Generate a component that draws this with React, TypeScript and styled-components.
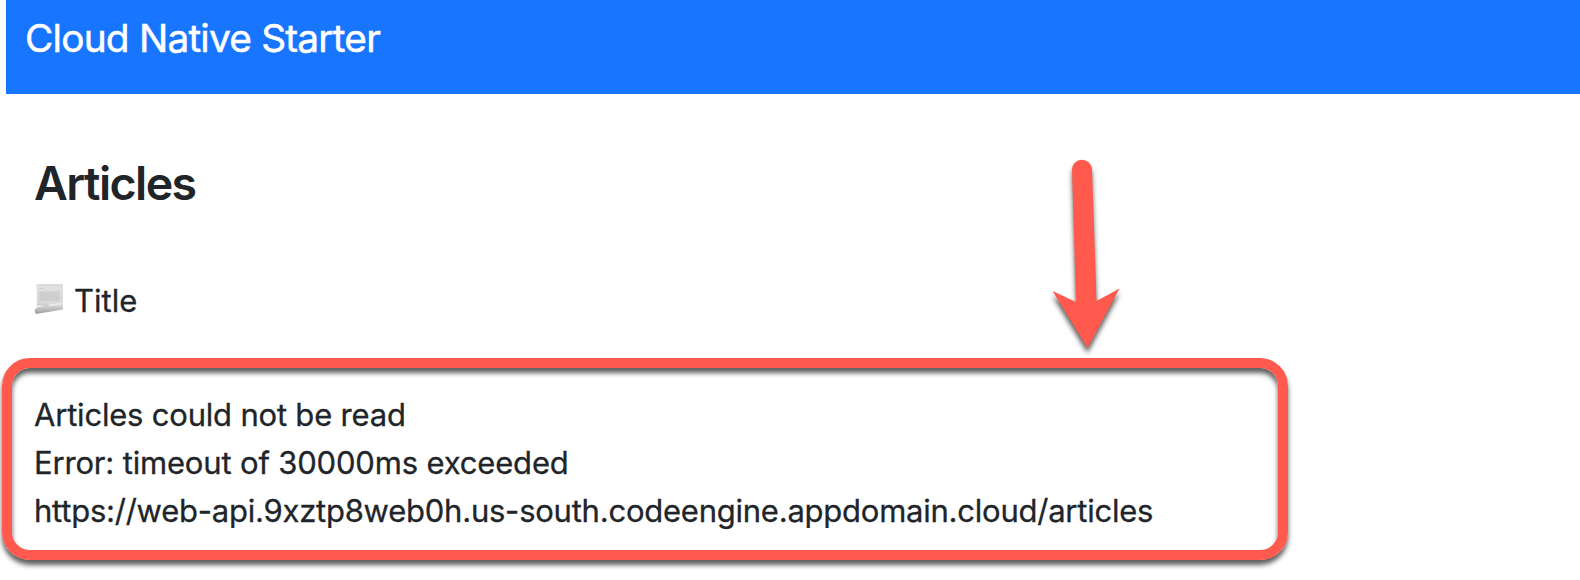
import React from "react";
import styled, { createGlobalStyle } from "styled-components";

const GlobalStyle = createGlobalStyle`
  * { box-sizing: border-box; }
  body {
    margin: 0;
    background: #fff;
    color: #212529;
    font-family: Inter, "Liberation Sans", sans-serif;
    font-weight: 400;
    overflow: hidden;
  }
`;

const Page = styled.div`
  position: relative;
  height: 580px;
  overflow: hidden;
`;

const Navbar = styled.header`
  height: 94px;
  margin-left: 6px;
  padding: 8px 19px;
  background: #1775ff;
`;

const Brand = styled.div`
  color: #fff;
  font-size: 38.8px;
  line-height: 60px;
  letter-spacing: -0.78px;
  white-space: nowrap;
  -webkit-text-stroke: 0.5px currentColor;
`;

const Heading = styled.h1`
  margin: 60px 0 0 34px;
  font-size: 46.5px;
  font-weight: 600;
  line-height: 58px;
  letter-spacing: -1.55px;
`;

const TitleRow = styled.div`
  display: flex;
  align-items: center;
  gap: 10px;
  height: 48px;
  margin: 65px 0 0 34px;
  font-size: 31px;
  line-height: 48px;
  -webkit-text-stroke: 0.3px currentColor;

  svg { margin-top: -4px; }
`;

const ErrorPanel = styled.section`
  width: 1286px;
  height: 202px;
  margin: 33px 0 0 2px;
  padding: 23px 22px;
  border: 10px solid #ff5a4d;
  border-radius: 28px;
  box-shadow:
    0 5px 5px rgba(0, 0, 0, 0.63),
    inset 0 5px 5px rgba(0, 0, 0, 0.63);
`;

const Line = styled.div<{ $tracking: number }>`
  font-size: 31px;
  line-height: 48px;
  letter-spacing: ${(p) => p.$tracking}px;
  white-space: nowrap;
  -webkit-text-stroke: 0.3px currentColor;
`;

const Pointer = styled.svg`
  position: absolute;
  left: 1040px;
  top: 150px;
  filter: drop-shadow(0 5px 2.5px rgba(0, 0, 0, 0.63));
`;

const ScrollIcon = () => (
  <svg width="30" height="32" viewBox="0 0 30 32">
    <defs>
      <linearGradient id="sheet" x1="0" y1="0" x2="0" y2="1">
        <stop offset="0" stopColor="#e2e2e2" />
        <stop offset="1" stopColor="#d4d4d4" />
      </linearGradient>
      <linearGradient id="roll" x1="0" y1="0" x2="0" y2="1">
        <stop offset="0" stopColor="#e0e0e0" />
        <stop offset="1" stopColor="#9c9c9c" />
      </linearGradient>
    </defs>
    <path d="M2.500 1.500H29V21L3 27Z" fill="url(#sheet)" />
    <path d="M2.500 2H29" stroke="#cfcfcf" />
    <path d="M5 5.500H9" stroke="#c8c8c8" />
    <path d="M5 8.500H25.500V18L5 18Z" fill="#cecece" />
    <path d="M3 21L12 22L29 19.500V22L2 27Z" fill="#ededed" />
    <path d="M1.500 25.500L29 21V26.500L2 31Q-.5 28 1.500 25.500Z" fill="url(#roll)" />
    <path d="M3 21.500L15 22.500L3 25" fill="none" stroke="#bdbdbd" strokeWidth=".8" />
  </svg>
);

export default function App() {
  return (
    <>
      <GlobalStyle />
      <Page>
        <Navbar>
          <Brand>Cloud Native Starter</Brand>
        </Navbar>
        <Heading>Articles</Heading>
        <TitleRow>
          <ScrollIcon />
          <span>Title</span>
        </TitleRow>
        <ErrorPanel>
          <Line $tracking={-0.2}>Articles could not be read</Line>
          <Line $tracking={-0.17}>Error: timeout of 30000ms exceeded</Line>
          <Line $tracking={-0.235}>
            https://web-api.9xztp8web0h.us-south.codeengine.appdomain.cloud/articles
          </Line>
        </ErrorPanel>
        <Pointer width="90" height="210" viewBox="1040 150 90 210">
          <path
            d="M1072 170A10 10 0 0 1 1092 169.500L1096.500 301L1119.500 288.500L1087.500 348L1052.500 291L1076 302Z"
            fill="#ff5a4d"
          />
        </Pointer>
      </Page>
    </>
  );
}
